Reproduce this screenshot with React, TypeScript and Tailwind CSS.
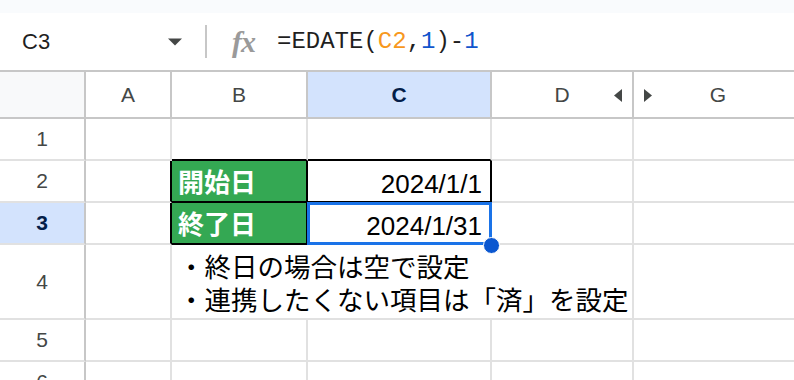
const grid = "border-[#e1e1e1]";
const head = "flex items-center justify-center border-r-2 border-b-2 border-[#c7c7c7] text-[21px] text-[#444746]";
const rowHead = "flex items-center justify-center border-r-2 border-b-2 border-r-[#c7c7c7] border-b-[#e1e1e1] text-[21px] text-[#444746]";
const cell = `border-r-2 border-b-2 ${grid}`;
const jp = "font-['Noto_Sans_CJK_JP','Noto_Sans',sans-serif]";

const PlainRow = ({ n }: { n: number }) => (
  <>
    <div className={rowHead}>{n}</div>
    <div className={cell} />
    <div className={cell} />
    <div className={cell} />
    <div className={cell} />
    <div className={cell} />
  </>
);

export default function App() {
  return (
    <div className="w-[794px] h-[380px] overflow-hidden bg-white font-['Liberation_Sans',Arial,sans-serif]">
      <div className="h-[13px] bg-[#f9fbfd]" />

      {/* formula bar */}
      <div className="h-[59px] flex items-center border-b-2 border-[#c7c7c7]">
        <div className="w-[183px] flex items-center justify-between pl-[22px]">
          <span className="text-[22px] text-[#1f1f1f]">C3</span>
          <svg width="16" height="8" viewBox="0 0 16 8">
            <path d="M1 0.5h14L8 7.5z" fill="#444746" />
          </svg>
        </div>
        <div className="ml-[22px] w-[2px] h-[33px] bg-[#c7c7c7]" />
        <span className="ml-[25px] font-['Liberation_Serif',serif] italic font-bold text-[30px] leading-none text-[#9a9a9a] tracking-[-1px]">
          fx
        </span>
        <span className="ml-[22px] font-['Liberation_Mono',monospace] text-[24px] text-[#1f1f1f]">
          =EDATE(<span className="text-[#f7981d]">C2</span>,<span className="text-[#1155cc]">1</span>)-<span className="text-[#1155cc]">1</span>
        </span>
      </div>

      {/* sheet grid */}
      <div className="grid grid-cols-[86px_86px_136px_184px_142px_170px] grid-rows-[47px_42px_42px_42px_75px_42px_42px]">
        <div className="bg-[#f8f9fa] border-r-2 border-b-2 border-[#c7c7c7]" />
        <div className={head}>A</div>
        <div className={head}>B</div>
        <div className={`${head} bg-[#d3e3fd] !text-[#041e49] font-bold`}>C</div>
        <div className={`${head} relative`}>
          D
          <svg className="absolute right-[10px] top-[17px]" width="8" height="13" viewBox="0 0 8 13">
            <path d="M8 0v13L0 6.5z" fill="#444746" />
          </svg>
        </div>
        <div className={`${head} relative`}>
          G
          <svg className="absolute left-[10px] top-[17px]" width="8" height="13" viewBox="0 0 8 13">
            <path d="M0 0v13l8-6.5z" fill="#444746" />
          </svg>
        </div>

        {/* row 1 */}
        <div className={rowHead}>1</div>
        <div className={cell} />
        <div className="border-r-2 border-b-2 border-r-[#e1e1e1] border-b-black" />
        <div className="border-r-2 border-b-2 border-r-[#e1e1e1] border-b-black" />
        <div className={cell} />
        <div className={cell} />

        {/* row 2 */}
        <div className={rowHead}>2</div>
        <div className="border-r-2 border-b-2 border-r-black border-b-[#e1e1e1]" />
        <div className={`flex items-center pl-[6px] bg-[#34a853] border-r-2 border-b-2 border-black text-white font-bold text-[26px] leading-none ${jp}`}>
          開始日
        </div>
        <div className="flex items-end justify-end pr-[8px] pb-[2px] border-r-2 border-b-2 border-black text-[26px] leading-[30px] text-black">
          2024/1/1
        </div>
        <div className={cell} />
        <div className={cell} />

        {/* row 3 */}
        <div className={`${rowHead} bg-[#d3e3fd] !text-[#041e49] font-bold`}>3</div>
        <div className="border-r-2 border-b-2 border-r-black border-b-[#e1e1e1]" />
        <div className={`flex items-center pl-[6px] bg-[#34a853] border-r-2 border-b-2 border-black text-white font-bold text-[26px] leading-none ${jp}`}>
          終了日
        </div>
        <div className="relative flex items-end justify-end pr-[8px] pb-[2px] border-r-2 border-b-2 border-black text-[26px] leading-[30px] text-black">
          2024/1/31
          <div className="absolute -left-[1px] -top-[1px] -right-[2px] -bottom-[2px] border-[3px] border-[#1a73e8] z-10" />
          <div className="absolute -right-[10px] -bottom-[11px] w-[17px] h-[17px] rounded-full bg-[#0b57d0] border border-white z-20" />
        </div>
        <div className={cell} />
        <div className={cell} />

        {/* row 4 */}
        <div className={rowHead}>4</div>
        <div className={cell} />
        <div className={`col-span-3 flex items-center pl-[6px] whitespace-nowrap text-[26.5px] leading-[33px] text-black ${jp} ${cell}`}>
          <div>
            <div>・終日の場合は空で設定</div>
            <div>・連携したくない項目は「済」を設定</div>
          </div>
        </div>
        <div className={cell} />

        <PlainRow n={5} />
        <PlainRow n={6} />
      </div>
    </div>
  );
}
